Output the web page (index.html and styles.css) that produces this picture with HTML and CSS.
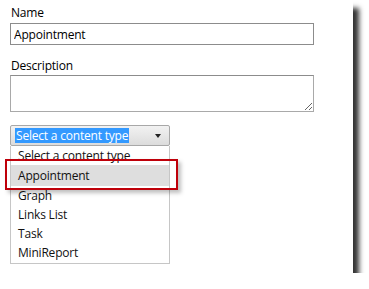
FILE: index.html
```html
<!DOCTYPE html>
<html lang="en">
<head>
    <meta charset="UTF-8">
    <title>New Content</title>
    <link rel="stylesheet" href="styles.css">
</head>
<body>
    <div class="sheet">
        <form class="form">
            <label class="label" for="name">Name</label>
            <input class="text-input" id="name" type="text" value="Appointment">

            <label class="label label-desc" for="desc">Description</label>
            <textarea class="text-area" id="desc"></textarea>

            <div class="picker">
                <div class="picker-box">
                    <span class="picker-value">Select a content type</span>
                    <span class="picker-arrow"></span>
                </div>
                <ul class="picker-list">
                    <li>Select a content type</li>
                    <li class="is-hover">Appointment</li>
                    <li>Graph</li>
                    <li>Links List</li>
                    <li>Task</li>
                    <li>MiniReport</li>
                </ul>
                <!-- callout drawn over the hovered option -->
                <div class="callout"></div>
            </div>
        </form>
    </div>
</body>
</html>
```

FILE: styles.css
```css
body {
    margin: 0;
    padding: 0;
    background: #ffffff;
    font-family: "Open Sans", "Noto Sans", sans-serif;
    font-size: 12px;
    letter-spacing: -0.2px;
    color: #000;
}
.sheet {
    width: 353px;
    height: 273px;
    background: #fff;
    box-shadow: 7px 7px 5px -1px rgba(0,0,0,0.8);
}
.form {
    padding: 4px 0 0 10px;
}
.label {
    display: block;
    line-height: 17px;
    height: 18px;
    margin-left: 1px;
    color: #000;
}
.label-desc {
    margin-top: 12px;
    height: 18px;
}
.text-input {
    display: block;
    box-sizing: border-box;
    width: 304px;
    height: 22px;
    margin: 1px 0 0 0;
    padding: 0 3px;
    border: 1px solid #8c8c8c;
    font-family: inherit;
    font-size: 12px;
    letter-spacing: -0.2px;
    color: #000;
    outline: none;
}
.text-area {
    display: block;
    box-sizing: border-box;
    width: 304px;
    height: 37px;
    margin: 0;
    border: 1px solid #a9a9a9;
    border-top-color: #8c8c8c;
    font-family: inherit;
    font-size: 12px;
    outline: none;
}
.picker {
    position: relative;
    width: 160px;
    margin-top: 13px;
}
.picker-box {
    box-sizing: border-box;
    height: 21px;
    width: 160px;
    border: 1px solid #a8a8a8;
    border-radius: 2px;
    background: linear-gradient(#f2f2f2, #dcdcdc);
    display: flex;
    align-items: center;
    padding: 0 4px 0 4px;
}
.picker-value {
    background: #3399ff;
    color: #fff;
    line-height: 15px;
    padding: 0 1px;
}
.picker-arrow {
    margin-left: auto;
    margin-right: 4px;
    width: 0;
    height: 0;
    border-left: 3.5px solid transparent;
    border-right: 3.5px solid transparent;
    border-top: 4px solid #222;
}
.picker-list {
    list-style: none;
    margin: 0;
    padding: 0 0 1px 0;
    width: 160px;
    box-sizing: border-box;
    border: 1px solid #c6c6c6;
    border-top: none;
    background: #fff;
}
.picker-list li {
    line-height: 19px;
    height: 19px;
    padding-left: 7px;
    color: #111;
}
.picker-list .is-hover {
    background: #dedede;
    height: 21px;
    line-height: 22px;
}
.callout {
    position: absolute;
    left: -5px;
    top: 34px;
    width: 169px;
    height: 27px;
    border: 2px solid #bf000a;
    box-shadow: 3px 3px 4px rgba(0,0,0,0.25);
}
```
